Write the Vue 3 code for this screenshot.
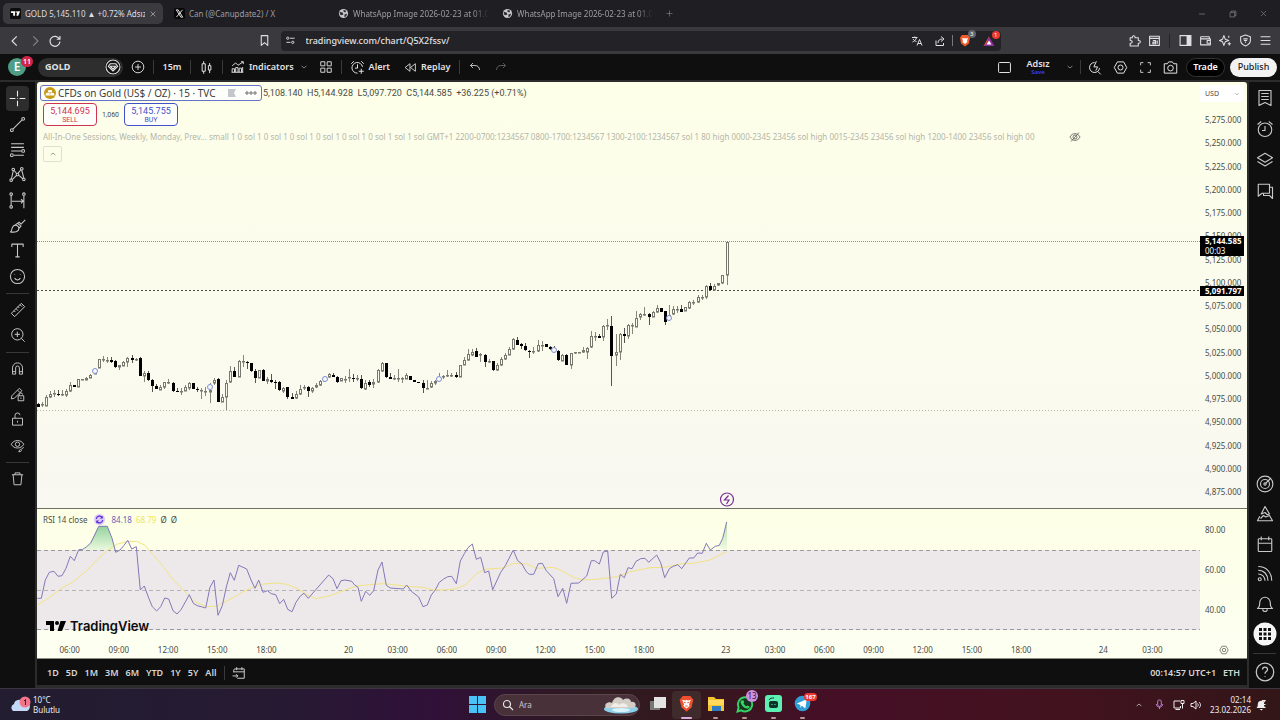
<script setup>
import { h } from 'vue'

const c = (x, y, r) => `M${x - r} ${y}a${r} ${r} 0 1 0 ${2 * r} 0a${r} ${r} 0 1 0 ${-2 * r} 0`

const shapes = {
  back: 'M15 4l-8 8 8 8',
  forward: 'M9 4l8 8-8 8',
  reload: 'M19.500 8.500A8.500 8.500 0 1 0 20.500 13M20.500 3.500v5.500h-5.500',
  bookmark: 'M6 3h12v18l-6-5-6 5z',
  tune: c(6, 7, 2.5) + 'M11 7h10' + c(17, 16, 2.5) + 'M3 16h9',
  translate: 'M2 5h11M7.500 3v2M11 5c-1 5-5 8-8 9M4 8c2 3 4 4 7 5M12 21l5-12 5 12M14 17h6',
  share: 'M4 11v10h15v-5M8 16c0-6 4-8 9-8M14 3l6 5-6 5',
  puzzle: 'M4 7h4c-1-5 6-5 5 0h6v5c5-1 5 6 0 5v5H4v-5c5 1 5-6 0-5z',
  readbox: 'M3 4h18v17H3zM3 8h18M9 12h5v6H9v-3h5M17 12v6',
  wallet: 'M3 5h16v4M3 5v15h18V9H3M21 12h-6v5h6',
  sparkle: 'M9 3l2.500 6.500L18 12l-6.500 2.500L9 21l-2.500-6.500L1 12l5.500-2.500zM19 15v6M16 18h6M18 3v4',
  shield: 'M12 2l9 3v7c0 5-4 8-9 10-5-2-9-5-9-10V5zM8 9h8M9 12h6M11 15h2',
  menu: 'M3 5h18M3 12h18M3 19h18',
  min: 'M5 12h14',
  restore: 'M5 8h11v11H5zM8 8V5h11v11h-3',
  close: 'M5 5l14 14M19 5L5 19',
  plus: 'M12 4v16M4 12h16',
  plusCircle: c(12, 12, 10) + 'M12 7v10M7 12h10',
  gem: c(12, 12, 10.5) + 'M8 7h8l3 4-7 7-7-7zM8 11l4 4 4-4z',
  candles: 'M5 6h5v12H5zM7.500 2v4M7.500 18v4M15 9h4v7h-4zM17 5v4M17 16v5',
  indicator: 'M2 21v-6h4v6M8 21v-8h4v8M14 21v-7h4v7M1 21h20M20 21v-9M2 10l6-5 4 4 9-6M17 3h4v4',
  chevDown: 'M5 9l7 6 7-6',
  chevUp: 'M5 15l7-6 7 6',
  grid: 'M3 3h7v7H3zM14 3h7v7h-7zM3 14h7v7H3zM14 14h7v7h-7z',
  alertPlus: 'M20 11a8.500 8.500 0 1 0-8 10M12 7v6H8M2 6l4-4M22 6l-4-4M18 14v8M14 18h8',
  replay: 'M11 5v14l-9-7zM21 5v14l-9-7z',
  undo: 'M8 4L3 9l5 5M3 9h9c6 0 9 4 9 9',
  redo: 'M16 4l5 5-5 5M21 9h-9c-6 0-9 4-9 9',
  square: 'M4 4h16a1.500 1.500 0 0 1 1.500 1.500v13a1.500 1.500 0 0 1-1.500 1.500H4a1.500 1.500 0 0 1-1.500-1.500v-13A1.500 1.500 0 0 1 4 4z',
  searchBolt: 'M12 4a8 8 0 1 0 8 9M17 18l5 5M15 2l-4 9h6l-3 6',
  hexGear: 'M7 3h10l5 9-5 9H7l-5-9z' + c(12, 12, 4),
  full: 'M3 8V3h5M16 3h5v5M21 16v5h-5M8 21H3v-5',
  camera: 'M2 6h5l2-3h6l2 3h5v15H2z' + c(12, 13, 4.5),
  cross: 'M12 1v8M12 15v8M1 12h8M15 12h8M11.500 12h1',
  trend: c(4, 20, 2) + c(20, 4, 2) + 'M5.500 18.500l13-13',
  fib: 'M3 4h18M3 9h18M3 14h15M7 20h14' + c(20, 14, 2) + c(4, 20, 2),
  pattern: c(3, 20, 1.8) + c(6, 5, 1.8) + c(18, 4, 1.8) + c(21, 19, 1.8) + c(12, 12, 1.8) + 'M3.500 18L6 7M7 6l4 5M13.500 13l6 5M17 5l-4 5M11 13l-6 6M18 6l3 11',
  range: c(3, 3, 1.8) + c(21, 3, 1.8) + c(3, 21, 1.8) + 'M3 5v14M21 5v18M4 13h16M17 10l3 3-3 3',
  brush: 'M2 21c3-2 1-5 4-8 3-3 8-1 8 3 0 5-6 6-12 5zM9 11l3-2 5 4-3 3M15 8l2 2 6-6M12 9l3-2',
  text: 'M4 7V3h16v4M12 3v18M9 21h6',
  smile: c(12, 12, 10) + 'M8 9v1M16 9v1M8 14c2 4 6 4 8 0',
  ruler: 'M2 17L17 2l5 5L7 22zM6 13l2 2M9 10l3 3M12 7l2 2M15 4l3 3',
  zoomIn: c(11, 11, 8.5) + 'M17 17l5 5M11 7v8M7 11h8',
  magnet: 'M4 21V11a8 8 0 0 1 16 0v10h-5V11a3 3 0 0 0-6 0v10zM4 17h5M15 17h5',
  pencilLock: 'M2 19l1-5L15 2l4 4L7 18zM12 5l4 4M13 14h9v8h-9zM15 14v-2a2.500 2.500 0 0 1 5 0M17.500 17v2',
  lock: 'M4 10h16v11H4zM8 10V6a4 4 0 0 1 8-1M12 14v3',
  eye: 'M2 10c4-8 16-8 20 0-4 8-16 8-20 0z' + c(12, 10, 3.5) + 'M14 22c1-4 3-4 4-3s0 3-4 3M18 18l4-3',
  eyeOff: 'M2 12c4-9 16-9 20 0-4 9-16 9-20 0z' + c(12, 12, 4) + 'M4 21L20 3',
  trash: 'M3 6h18M8 6V3h8v3M5 6l1.500 16h11L19 6',
  list: 'M4 2h16v20l-8-4-8 4zM7 6h10M7 10h10M7 14h10',
  alarm: c(12, 13, 9) + 'M12 8v6H8M2 6l5-4M22 6l-5-4',
  layers: 'M12 3l10 6-10 6L2 9zM2 14l10 6 10-6',
  chat: 'M3 3h15v12H8l-5 4zM18 7h4v15l-4-4h-8v-3',
  target: c(12, 12, 10.5) + c(12, 12, 6) + c(12, 12, 1.5) + 'M13 11l7-7',
  mount: 'M12 2l6 10-3 1-3-3-5 2zM5 15l-3 6h20l-4-7-5 2-3-2-4 4',
  calendar: 'M4 5h16a1 1 0 0 1 1 1v15a1 1 0 0 1-1 1H4a1 1 0 0 1-1-1V6a1 1 0 0 1 1-1zM3 11h18M7 2v5M17 2v5',
  feed: c(5, 19, 2) + 'M3 12c5 0 9 4 9 9M3 7c8 0 13 6 13 14M3 2c11 0 18 8 18 19',
  bell: 'M2 18h20c-3-2-3-4-3-8a7 7 0 0 0-14 0c0 4 0 6-3 8zM9 19c0 4 6 4 6 0',
  help: c(12, 12, 10.5) + 'M9 9c0-4 6-4 6 0 0 3-3 2-3 5M12 17v1',
  goto: 'M7 5h14v16H9M3 11V7c0-1 1-2 2-2h2M3 10h18M8 2v5M17 2v5M1 17h9M7 14l3 3-3 3',
  search: c(10, 10, 7) + 'M15 15l7 7',
  mic: 'M12 2c4 0 4 2 4 9s-8 7-8 0 0-9 4-9zM5 11c0 9 14 9 14 0M12 18v4',
  monitor: 'M14 4H2v14h13v-4M5 21h9M16 3h6v6h-6zM19 9v10',
  sound: 'M2 9h4l6-5v16l-6-5H2zM15 9c2 2 2 4 0 6M18 6c4 4 4 8 0 12'
}

const Ico = (props) =>
  h('svg', { viewBox: '0 0 24 24', width: props.s || 16, height: props.s || 16, class: 'ico', 'aria-hidden': 'true' }, [
    h('path', { d: shapes[props.n] })
  ])
Ico.props = ['n', 's']

const railA = [['cross', 'Cross'], ['trend', 'Trend line'], ['fib', 'Fib retracement'], ['pattern', 'Patterns'], ['range', 'Ranges'], ['brush', 'Brush'], ['text', 'Text'], ['smile', 'Icons']]
const railB = [['ruler', 'Measure'], ['zoomIn', 'Zoom in']]
const railC = [['magnet', 'Magnet'], ['pencilLock', 'Stay in drawing mode'], ['lock', 'Lock drawings'], ['eye', 'Hide drawings']]
const sideTop = [['list', 'Watchlist'], ['alarm', 'Alerts'], ['layers', 'Object tree'], ['chat', 'Chats']]
const sideBottom = [['target', 'Screeners'], ['mount', 'Pine'], ['calendar', 'Calendar'], ['feed', 'News'], ['bell', 'Notifications']]

const prices = Array.from({ length: 17 }, (_, i) =>
  (5275 - i * 25).toLocaleString('en-US', { minimumFractionDigits: 3 })
)
const times = ['06:00', '09:00', '12:00', '15:00', '18:00', '', '20', '03:00', '06:00', '09:00', '12:00', '15:00', '18:00', '', '23', '03:00', '06:00', '09:00', '12:00', '15:00', '18:00', '', '24', '03:00']
const ranges = ['1D', '5D', '1M', '3M', '6M', 'YTD', '1Y', '5Y', 'All']

// x, filled, body top, body bottom, high, low
const early = [
  [24,1,312,320,308,322],[36,0,313,316,307,320],[48,0,290,317,284,318],[60,0,281,292,274,293],[73,0,279,281,270,290],[85,1,281,285,270,288],
  [97,0,282,286,270,287],[109,0,272,285,266,292],[122,0,254,274,247,276],[134,1,256,260,254,261],[146,0,238,260,238,260],[158,0,238,239,238,239],
  [170,0,235,239,232,240],[182,0,226,234,223,235],[195,0,208,222,208,222],[207,0,178,203,176,204],[220,0,177,178,168,185],[232,0,179,181,172,188],
  [244,1,179,186,170,188],[256,1,184,202,180,204],[269,0,196,200,194,210],[281,0,186,198,184,199],[293,0,173,187,171,200],[306,1,174,181,166,188],
  [319,0,176,180,173,182],[331,1,174,228,171,228],[343,0,220,228,212,246],[355,1,219,241,214,242],[367,1,240,259,238,275],[380,1,258,267,252,268],
  [392,0,262,270,255,271],[404,0,247,262,246,268],[416,0,247,249,238,252],[429,1,249,273,247,275],[441,1,272,276,265,277],[453,0,272,277,265,286],
  [466,0,260,272,255,274],[478,0,250,265,247,270],[490,1,249,266,248,267],[502,1,266,271,262,277],[514,0,271,273,265,298],[527,0,272,274,262,287],
  [541,0,270,275,250,308],[552,0,240,248,234,255],[565,1,236,305,233,305],[577,0,290,305,282,307],[589,0,248,290,240,330],[601,0,213,246,197,248],
  [614,1,212,230,200,232],[627,0,182,230,181,232],[639,0,184,186,165,200],[651,1,186,190,184,207],[663,1,190,214,188,215],[675,1,214,233,208,250],
  [687,0,211,233,209,234],[699,1,210,243,208,244],[712,0,238,242,232,252],[724,1,240,247,222,250],[737,1,247,249,239,266],[749,1,246,270,244,272],
  [761,0,264,272,260,280],[773,1,262,290,260,298],[786,1,290,296,280,298],[798,0,283,295,272,297],[811,0,266,282,255,284],[823,0,260,264,255,269],
  [835,1,260,273,257,290],[848,0,265,272,262,278],[860,0,255,262,248,264],[872,0,242,255,240,257],[884,0,237,242,237,242],[897,0,222,230,220,233],
  [909,1,226,230,219,232],[921,1,230,247,228,248],[933,0,233,244,233,244],[946,0,236,237,229,250],[958,0,231,232,206,246],[970,1,233,236,222,246],
  [982,0,235,236,226,242],[995,1,238,263,226,268],[1007,0,248,266,240,270],[1019,1,247,254,240,260],[1031,0,245,252,238,264],[1045,0,210,247,208,249],
  [1057,0,190,213,187,215],[1069,1,190,231,188,233],[1081,1,232,236,219,238],[1093,0,234,237,226,240],[1105,0,234,235,206,246]
]
const late = [
  [37,0,474,476,470,488],[50,0,466,476,458,478],[62,1,468,480,468,480],[74,1,480,485,480,485],[86,1,485,490,485,490],[99,1,490,505,480,518],
  [112,0,503,505,480,507],[124,0,488,502,484,504],[136,0,484,490,480,495],[148,0,472,478,458,480],[161,0,468,470,464,478],[173,0,464,467,450,470],
  [185,0,465,467,460,472],[199,1,465,472,455,474],[211,0,434,470,434,470],[223,0,420,434,410,436],[236,0,403,420,386,424],[248,0,396,405,388,408],
  [259,1,393,410,384,411],[272,0,402,406,398,426],[285,1,405,425,403,442],[297,0,424,426,418,430],[309,1,424,450,422,452],[321,0,434,451,430,452],
  [333,0,418,434,412,438],[346,0,406,417,398,419],[359,0,388,404,382,406],[370,0,358,388,354,390],[382,1,361,374,350,376],[394,1,373,378,368,386],
  [406,1,378,391,370,392],[418,1,392,396,390,414],[431,0,393,395,382,402],[445,0,374,394,360,396],[457,0,374,376,362,394],[469,1,373,380,371,382],
  [482,1,380,388,378,390],[494,1,385,395,378,396],[506,1,393,421,390,424],[518,0,405,422,403,424],[530,1,405,434,403,436],[543,0,400,434,398,446],
  [555,0,397,400,395,403],[567,0,396,399,396,399],[579,0,389,397,382,399],[591,0,384,396,380,416],[604,0,349,382,332,384],[616,0,347,349,337,362],
  [628,1,347,353,342,354],[640,0,319,351,315,362],[653,0,314,318,298,330],[665,1,317,407,288,498],[679,0,397,404,342,438],[691,0,342,396,338,420],
  [703,1,342,348,324,368],[716,0,316,348,312,358],[728,0,316,318,310,342],[740,0,293,320,272,322],[752,0,282,290,280,300],[764,0,282,284,260,288],
  [777,1,282,290,280,314],[789,0,276,290,274,292],[801,0,264,276,254,280],[813,1,264,275,264,275],[825,1,274,305,272,314],[837,0,284,295,256,300],
  [851,0,267,283,258,286],[863,0,266,268,258,278],[875,1,268,275,254,276],[887,0,262,274,262,274],[899,0,247,265,243,266],[911,0,246,248,240,256],
  [925,0,230,247,225,249],[937,0,231,233,224,240],[949,0,199,230,195,236],[961,1,197,211,190,214],[973,0,197,209,192,212],[985,0,189,196,188,198],
  [997,0,166,190,164,192],[1011,0,66,166,66,194]
]
const py = (v) => Math.round(218 + v / 3)
const bars = [...early, ...late.map(([x, f, ...v]) => [x + 1080, f, ...v.map((n) => n - 240)])].map(
  ([x, filled, top, bottom, high, low]) => {
    const cx = Math.floor(x / 3 - 7)
    return { cx, filled, top: py(top), bottom: Math.max(py(bottom), py(top) + 1), high: py(high), low: py(low) }
  }
)
const marks = [[58, 289], [173, 305], [288, 297], [402, 297], [517, 268], [632, 236]]

const join = (a, b) => [...a, ...b.map(([x, y]) => [x + 1080, y])].map(([x, y]) => [+(x / 3 - 7).toFixed(1), +(y / 3 - 9).toFixed(1)]).join(' ')
const rsi = join(
  [[22,295],[34,295],[46,240],[58,217],[72,214],[84,229],[96,227],[108,205],[121,169],[133,182],[146,149],[158,148],[170,140],[182,129],[194,105],[206,79],[232,79],[246,115],[257,157],[270,150],[282,136],[293,121],[305,147],[319,140],[331,270],[343,258],[355,291],[367,320],[380,333],[392,320],[404,294],[416,297],[429,332],[441,342],[453,329],[466,306],[478,284],[490,310],[502,317],[514,320],[527,324],[540,262],[552,240],[564,346],[577,317],[589,261],[601,218],[613,241],[626,196],[650,207],[663,240],[675,265],[686,240],[699,277],[712,272],[724,281],[737,284],[749,311],[761,298],[773,328],[786,335],[798,307],[811,288],[822,280],[835,295],[896,225],[909,236],[921,266],[933,242],[945,240],[965,244],[974,255],[984,262],[994,304],[1007,274],[1019,286],[1031,272],[1044,210],[1056,186],[1069,256],[1081,264]],
  [[40,267],[50,255],[64,274],[86,291],[99,320],[112,315],[124,285],[136,270],[148,247],[161,237],[173,230],[185,229],[199,251],[211,183],[223,161],[234,143],[247,132],[259,178],[272,172],[284,218],[296,213],[308,269],[332,217],[346,197],[370,150],[383,182],[396,192],[409,215],[418,223],[431,223],[445,191],[457,190],[469,212],[491,236],[504,290],[518,265],[530,310],[543,250],[566,249],[590,228],[604,182],[614,182],[628,192],[640,156],[653,153],[665,295],[679,282],[691,223],[703,233],[714,203],[726,206],[738,184],[752,176],[765,175],[776,187],[800,165],[812,188],[824,233],[838,206],[850,199],[863,194],[875,206],[898,174],[911,174],[923,159],[937,160],[949,130],[961,150],[976,139],[988,136],[998,115],[1010,66]]
)
const average = join(
  [[22,315],[50,298],[100,262],[130,245],[170,212],[200,180],[230,153],[260,133],[290,125],[320,124],[345,136],[370,165],[400,200],[430,240],[465,275],[490,303],[530,320],[560,318],[600,298],[640,275],[670,262],[700,252],[740,249],[770,253],[800,265],[840,289],[860,296],[900,287],[940,272],[980,258],[1020,254],[1060,251]],
  [[30,256],[60,260],[100,262],[130,270],[160,270],[200,266],[230,252],[260,220],[290,207],[340,204],[370,190],[410,192],[440,205],[490,202],[520,214],[550,232],[580,240],[620,238],[680,230],[720,215],[780,203],[830,201],[870,192],[910,190],[960,180],[1010,155]]
)
</script>

<template>
  <div class="screen">
    <nav class="tabs" aria-label="Browser tabs">
      <a class="tab active" href="#gold">
        <svg class="fav" viewBox="0 0 12 12"><rect width="12" height="12" rx="2" fill="#0c0c0c" /><path d="M1 3.500h4.500v5h-2v-3H1zM8 3.500h3L9 8.500H7z" fill="#fff" /><circle cx="6.800" cy="4.400" r="0.900" fill="#fff" /></svg>
        <span class="tab-text">GOLD 5,145.110 ▲ +0.72% Adsız</span>
        <Ico n="close" s="8" />
      </a>
      <a class="tab" href="#x">
        <svg class="fav" viewBox="0 0 12 12"><rect width="12" height="12" rx="2" fill="#070707" /><path d="M2.500 2h2l5 8h-2zM9.300 2L2.600 10" fill="none" stroke="#eee" stroke-width="1" /></svg>
        <span class="tab-text">Can (@Canupdate2) / X</span>
      </a>
      <a v-for="n in 2" :key="n" class="tab" href="#image">
        <svg class="fav" viewBox="0 0 12 12"><circle cx="6" cy="6" r="5" fill="#c9c9cc" /><path d="M2 4l3 1 1 2-2 1-2-1zM6 2l3 1-1 2-2-1zM7 7l3-1-1 3-2 1z" fill="#303034" /></svg>
        <span class="tab-text fade">WhatsApp Image 2026-02-23 at 01.0</span>
      </a>
      <button class="newtab" aria-label="New tab"><Ico n="plus" s="9" /></button>
      <span class="grow"></span>
      <button class="win" aria-label="Minimize"><Ico n="min" s="10" /></button>
      <button class="win" aria-label="Restore"><Ico n="restore" s="10" /></button>
      <button class="win" aria-label="Close"><Ico n="close" s="9" /></button>
    </nav>

    <div class="browser">
      <button class="b20" aria-label="Back"><Ico n="back" s="14" /></button>
      <button class="b20 dim" aria-label="Forward"><Ico n="forward" s="14" /></button>
      <button class="b20" aria-label="Reload"><Ico n="reload" s="14" /></button>
      <span class="grow wide-left"></span>
      <button class="b20 mark" aria-label="Bookmark"><Ico n="bookmark" s="13" /></button>
      <div class="address">
        <button class="b20" aria-label="Site settings"><Ico n="tune" s="11" /></button>
        <input class="url" aria-label="Address" value="tradingview.com/chart/Q5X2fssv/" />
        <button class="b23" aria-label="Translate"><Ico n="translate" s="12" /></button>
        <button class="b23" aria-label="Share"><Ico n="share" s="12" /></button>
        <span class="vline light"></span>
        <button class="b24 badged" aria-label="Brave Shields">
          <svg width="12" height="13" viewBox="0 0 24 26"><path d="M6 2h12l4 5-2 12-8 6-8-6L2 7z" fill="#f15a29" /><path d="M6 8l4 1 2-1 2 1 4-1-2 6 1 2-5 4-5-4 1-2z" fill="#fff" /></svg>
          <span class="dot grey">3</span>
        </button>
        <button class="b24 badged" aria-label="Rewards">
          <svg width="12" height="12" viewBox="0 0 24 24"><path d="M12 3L1 22h11z" fill="#f0522d" /><path d="M12 3l11 19H1l6-5z" fill="#8d2f9c" /><path d="M12 11l5 8H7z" fill="#fff" /></svg>
          <span class="dot red">1</span>
        </button>
      </div>
      <span class="grow narrow-right"></span>
      <button class="b20" aria-label="Extensions"><Ico n="puzzle" s="13" /></button>
      <button class="b20" aria-label="Search page"><Ico n="readbox" s="13" /></button>
      <span class="vline dark"></span>
      <button class="b20" aria-label="Sidebar">
        <svg width="13" height="13" viewBox="0 0 24 24"><path d="M2 3h20v18H2z" fill="none" stroke="currentColor" stroke-width="2" /><path d="M14 3h8v18h-8z" fill="currentColor" /></svg>
      </button>
      <button class="b20" aria-label="Wallet"><Ico n="wallet" s="13" /></button>
      <button class="b20" aria-label="Assistant"><Ico n="sparkle" s="13" /></button>
      <button class="b20" aria-label="VPN"><Ico n="shield" s="13" /></button>
      <button class="b20" aria-label="Menu"><Ico n="menu" s="13" /></button>
    </div>

    <header class="top">
      <button class="avatar" aria-label="Account"><span class="face">E</span><span class="count">11</span></button>
      <button class="symbol">GOLD <Ico n="gem" s="16" /></button>
      <button class="b30" aria-label="Compare"><Ico n="plusCircle" s="14" /></button>
      <span class="vline"></span>
      <button class="b36">15m</button>
      <span class="vline"></span>
      <button class="b31" aria-label="Chart type"><Ico n="candles" s="15" /></button>
      <span class="vline"></span>
      <button class="labelled ind"><Ico n="indicator" s="14" />Indicators</button>
      <button class="b20" aria-label="Favourites"><Ico n="chevDown" s="8" /></button>
      <button class="b24" aria-label="Templates"><Ico n="grid" s="14" /></button>
      <span class="vline after-grid"></span>
      <button class="labelled"><Ico n="alertPlus" s="15" />Alert</button>
      <button class="labelled rep"><Ico n="replay" s="13" />Replay</button>
      <span class="vline"></span>
      <button class="b30" aria-label="Undo"><Ico n="undo" s="12" /></button>
      <button class="b20 faint" aria-label="Redo"><Ico n="redo" s="12" /></button>
      <span class="grow"></span>
      <button class="b30" aria-label="Layout"><Ico n="square" s="15" /></button>
      <button class="layout"><span>Adsız</span><span class="save">Save</span></button>
      <button class="b20" aria-label="Manage layouts"><Ico n="chevDown" s="8" /></button>
      <span class="vline"></span>
      <button class="b26" aria-label="Quick search"><Ico n="searchBolt" s="15" /></button>
      <button class="b26" aria-label="Settings"><Ico n="hexGear" s="15" /></button>
      <button class="b24" aria-label="Fullscreen"><Ico n="full" s="13" /></button>
      <button class="b26" aria-label="Snapshot"><Ico n="camera" s="15" /></button>
      <button class="trade">Trade</button>
      <button class="publish">Publish</button>
    </header>

    <main class="work">
      <aside class="rail left" aria-label="Drawing tools">
        <div class="group g8"><button v-for="(t, i) in railA" :key="t[0]" :class="{ on: i === 0 }" :aria-label="t[1]"><Ico :n="t[0]" s="17" /></button></div>
        <hr />
        <div class="group g2"><button v-for="t in railB" :key="t[0]" :aria-label="t[1]"><Ico :n="t[0]" s="16" /></button></div>
        <hr />
        <div class="group g4"><button v-for="t in railC" :key="t[0]" :aria-label="t[1]"><Ico :n="t[0]" s="15" /></button></div>
        <hr />
        <div class="group g1"><button aria-label="Remove"><Ico n="trash" s="15" /></button></div>
      </aside>

      <section class="center">
        <div class="pane price">
          <div class="plot">
            <svg class="canvas" viewBox="0 0 1163 426" preserveAspectRatio="none">
              <path d="M0 159.500H1163" class="dots strong" />
              <path d="M0 208.500H1163" class="dash-now" />
              <path d="M0 328.500H1163" class="dots" />
              <g v-for="(b, i) in bars" :key="i" :class="b.filled ? 'down' : 'up'">
                <path :d="`M${b.cx + 0.5} ${b.high}V${b.low}`" />
                <rect v-if="b.filled" :x="b.cx - 1" :y="b.top" width="3" :height="b.bottom - b.top" />
                <rect v-else :x="b.cx - 0.5" :y="b.top + 0.5" width="2" :height="b.bottom - b.top - 0.5" />
              </g>
              <circle v-for="m in marks" :key="m[0]" :cx="m[0]" :cy="m[1]" r="2.500" class="ring" />
              <circle cx="690" cy="417.500" r="6.500" class="event" />
              <path d="M691.500 413.500l-4 4.500h4.500l-2.500 4" class="event" />
            </svg>
            <div class="legend">
              <div class="row">
                <button class="title">
                  <svg class="gold" viewBox="0 0 24 24"><circle cx="12" cy="12" r="12" fill="#c79a16" /><path d="M9 6h6l2 5H7zM4 12h7l1 5H3zM13 12h7l1 5h-9z" fill="#fff" /></svg>
                  <span>CFDs on Gold (US$ / OZ) · 15 · TVC</span>
                  <svg class="flag" viewBox="0 0 8 8"><path d="M0 0h8L6 4l2 4H0z" fill="#c5c6cc" /></svg>
                  <svg class="more" viewBox="0 0 12 4"><circle cx="2" cy="2" r="1.200" /><circle cx="6" cy="2" r="1.200" /><circle cx="10" cy="2" r="1.200" /></svg>
                </button>
                <span class="ohlc">5,108.140&nbsp; H5,144.928&nbsp; L5,097.720&nbsp; C5,144.585&nbsp; +36.225 (+0.71%)</span>
              </div>
              <div class="row quotes">
                <button class="quote sell"><span>5,144.695</span><small>SELL</small></button>
                <span class="spread">1,060</span>
                <button class="quote buy"><span>5,145.755</span><small>BUY</small></button>
              </div>
              <div class="row study">
                <span class="study-text">All-In-One Sessions, Weekly, Monday, Prev... small 1 0 sol 1 0 sol 1 0 sol 1 0 sol 1 0 sol 1 0 sol 1 sol 1 sol GMT+1 2200-0700:1234567 0800-1700:1234567 1300-2100:1234567 sol 1 80 high 0000-2345 23456 sol high 0015-2345 23456 sol high 1200-1400 23456 sol high 00</span>
                <Ico n="eyeOff" s="12" />
              </div>
              <button class="fold" aria-label="Collapse legend"><Ico n="chevUp" s="8" /></button>
            </div>
          </div>
          <div class="scale">
            <label class="currency"><select aria-label="Currency"><option>USD</option></select><Ico n="chevDown" s="6" /></label>
            <span v-for="p in prices" :key="p">{{ p }}</span>
            <div class="tag last"><b>5,144.585</b><span>00:03</span></div>
            <div class="tag prev"><b>5,091.797</b></div>
          </div>
        </div>

        <div class="pane rsi">
          <div class="plot">
            <svg class="canvas" viewBox="0 0 1163 132" preserveAspectRatio="none">
              <defs>
                <linearGradient id="over" x1="0" y1="0" x2="0" y2="1"><stop offset="0" stop-color="#93d29b" /><stop offset="1" stop-color="#ebf9dd" /></linearGradient>
              </defs>
              <rect x="0" y="41" width="1163" height="80" fill="#ede9eb" />
              <path d="M46 41l7-7 5-10 4-7h8l5 12 4 12z" fill="url(#over)" />
              <path d="M681 38l5-9 4-17v29z" fill="url(#over)" opacity="0.700" />
              <path d="M0 41.500H1163M0 120.500H1163" class="level" />
              <path d="M0 81.500H1163" class="level mid" />
              <polyline :points="average" class="avg" />
              <polyline :points="rsi" class="osc" />
            </svg>
            <div class="rsi-legend">
              <span>RSI 14 close</span>
              <svg class="sync" viewBox="0 0 24 24"><circle cx="12" cy="12" r="12" fill="#d9c8fb" /><path d="M5 11a7 7 0 0 1 13-3M19 13a7 7 0 0 1-13 3" fill="none" stroke="#5b2bd0" stroke-width="2.500" /><path d="M19 4v6h-6zM5 20v-6h6z" fill="#5b2bd0" /></svg>
              <span class="violet">84.18</span><span class="yellow">68.79</span><span>Ø</span><span>Ø</span>
            </div>
            <div class="brand">
              <svg viewBox="0 0 20 12" width="20" height="12"><path d="M0 1h8v10H4V5H0zM14.500 1H20l-4 10h-4.500z" /><circle cx="11" cy="3" r="2" /></svg>
              TradingView
            </div>
          </div>
          <div class="scale rsi-scale"><span>80.00</span><span>60.00</span><span>40.00</span></div>
        </div>

        <div class="axis">
          <div class="times"><span v-for="(t, i) in times" :key="i" :class="{ gap: !t }">{{ t }}</span></div>
          <button class="axis-set" aria-label="Axis settings"><Ico n="hexGear" s="10" /></button>
        </div>

        <footer class="ranges">
          <button v-for="r in ranges" :key="r">{{ r }}</button>
          <span class="vline"></span>
          <button aria-label="Go to date"><Ico n="goto" s="14" /></button>
          <span class="grow"></span>
          <button>00:14:57 UTC+1</button>
          <button>ETH</button>
        </footer>
      </section>

      <aside class="rail right" aria-label="Panels">
        <div class="side-top">
          <button v-for="t in sideTop" :key="t[0]" :aria-label="t[1]"><Ico :n="t[0]" s="18" /></button>
        </div>
        <span class="grow"></span>
        <button v-for="t in sideBottom" :key="t[0]" :aria-label="t[1]"><Ico :n="t[0]" s="18" /></button>
        <button aria-label="Products">
          <svg width="24" height="24" viewBox="0 0 24 24"><circle cx="12" cy="12" r="11.500" fill="#f5f5f5" /><path d="M6 6h3v3H6zM10.500 6h3v3h-3zM15 6h3v3h-3zM6 10.500h3v3H6zM10.500 10.500h3v3h-3zM15 10.500h3v3h-3zM6 15h3v3H6zM10.500 15h3v3h-3zM15 15h3v3h-3z" fill="#111" /></svg>
        </button>
        <hr />
        <button aria-label="Help"><Ico n="help" s="20" /></button>
      </aside>
    </main>

    <footer class="taskbar">
      <button class="weather">
        <svg width="22" height="18" viewBox="0 0 22 18"><path d="M3 15a4 4 0 0 1 1-7 5 5 0 0 1 9-2 4.500 4.500 0 0 1 4 9z" fill="#c5daf7" /><circle cx="15" cy="6" r="5.500" fill="#f0768c" /><path d="M14 5l1.500-1.500V9" fill="none" stroke="#5b1526" /></svg>
        <span class="deg"><span>10°C</span><span>Bulutlu</span></span>
      </button>
      <div class="apps">
        <button class="start" aria-label="Start"><svg width="17" height="17" viewBox="0 0 17 17"><path d="M0 0h8v8H0zM9 0h8v8H9zM0 9h8v8H0zM9 9h8v8H9z" fill="#49c3f5" /></svg></button>
        <label class="find">
          <Ico n="search" s="12" />
          <input aria-label="Ara" placeholder="Ara" />
          <svg width="36" height="18" viewBox="0 0 36 18"><ellipse cx="18" cy="13" rx="17" ry="4.500" fill="#8ed0ea" /><path d="M3 12c-3-5 4-7 6-5 2-7 9-7 11-3 4-3 8-1 8 2 5-1 6 4 3 6z" fill="#d4cdc6" /><path d="M8 11c2-5 6-5 8-2 3-3 8-2 9 2z" fill="#f1eeea" /><ellipse cx="18" cy="14" rx="9" ry="2" fill="#d9f2fb" /></svg>
        </label>
        <button class="app" aria-label="Task view"><svg width="18" height="18" viewBox="0 0 18 18"><rect x="1" y="6" width="10" height="9" fill="#777" /><rect x="5" y="2" width="12" height="11" fill="#e3e3e3" /></svg></button>
        <button class="app cur" aria-label="Brave"><svg width="15" height="17" viewBox="0 0 24 26"><path d="M6 1h12l5 6-3 12-8 7-8-7L1 7z" fill="#f04e2c" /><path d="M5 7l5 1 2-1 2 1 5-1-3 7 1 3-5 4-5-4 1-3z" fill="#fff" /><path d="M8 11l3 1M16 11l-3 1M10 17h4" stroke="#f04e2c" stroke-width="1.500" /></svg></button>
        <button class="app run" aria-label="Explorer"><svg width="18" height="17" viewBox="0 0 18 17"><path d="M1 2h6l2 2h8v12H1z" fill="#f6c52d" /><path d="M1 5h16v5H1z" fill="#ffd95a" /><path d="M5 11h9v5H5z" fill="#2b7cc4" /></svg></button>
        <button class="app run badged" aria-label="WhatsApp">
          <svg width="18" height="18" viewBox="0 0 24 24"><path d="M2 22l1.500-5.500A9.500 9.500 0 1 1 7 20.500z" fill="#153521" stroke="#35d366" stroke-width="2.500" /><path d="M8 7l2 0 1 3-1 1c1 2 2 3 4 4l1-1 3 1c0 3-2 3-4 3-4-1-7-4-8-8 0-1 1-3 2-3z" fill="#35d366" /></svg>
          <span class="dot lilac">13</span>
        </button>
        <button class="app run" aria-label="Messenger"><svg width="17" height="17" viewBox="0 0 17 17"><rect width="17" height="17" rx="3" fill="#5df0b4" /><rect x="4" y="6" width="9" height="7" rx="2" fill="#0d3328" /><path d="M7 9v1M10 9v1" fill="none" stroke="#5df0b4" /><path d="M4 5c1-2 3-2 5-2" fill="none" stroke="#0d3328" /></svg></button>
        <button class="app run badged" aria-label="Telegram">
          <svg width="17" height="17" viewBox="0 0 24 24"><circle cx="12" cy="12" r="11" fill="#2f9fd8" /><path d="M4 12l14-6-2 13-5-4-2 3v-4z" fill="#fff" /></svg>
          <span class="dot red wide">167</span>
        </button>
      </div>
      <div class="tray">
        <button class="b20" aria-label="Hidden icons"><Ico n="chevUp" s="8" /></button>
        <button class="b20 mic" aria-label="Microphone"><Ico n="mic" s="11" /></button>
        <button class="b20" aria-label="Display"><Ico n="monitor" s="12" /></button>
        <button class="volume" aria-label="Volume"><Ico n="sound" s="12" /></button>
        <button class="clock"><span>02:14</span><span>23.02.2026</span></button>
        <button class="b20" aria-label="Notifications"><svg width="11" height="12" viewBox="0 0 22 24"><path d="M1 18c3-2 2-6 3-10 1-5 9-6 12-3v9l4 4zM7 20h7l-3 3z" fill="#eee" /><path d="M12 3h7l-7 8h7" fill="none" stroke="#eee" stroke-width="2" /></svg></button>
      </div>
    </footer>
  </div>
</template>

<style>
html, body { margin: 0; background: #0f0f0f; }
</style>

<style scoped>
.screen { min-height: 100vh; display: flex; flex-direction: column; background: #2c2c2c; color: #dbdbdb; font: 9px/12px "Noto Sans", "Open Sans", sans-serif; overflow: hidden; }
.screen * { box-sizing: border-box; }
button, input, select { font: inherit; color: inherit; background: none; border: 0; padding: 0; margin: 0; outline: 0; }
button { display: flex; align-items: center; justify-content: center; flex: none; }
svg { display: block; flex: none; }
.ico { fill: none; stroke: currentColor; stroke-width: 1.6; stroke-linejoin: round; }
.grow { flex: 1; }
.b20 { width: 20px; } .b23 { width: 23px; } .b24 { width: 24px; } .b26 { width: 26px; } .b30 { width: 30px; } .b31 { width: 31px; } .b36 { width: 36px; }
.vline { width: 1px; height: 14px; background: #3a3a3a; flex: none; }

.tabs { height: 27px; display: flex; align-items: center; gap: 4px; padding: 0 3px; background: #1f1e23; }
.tab { width: 160px; height: 21px; display: flex; align-items: center; gap: 4px; padding: 0 2px 0 7px; border-radius: 5px; color: #9d9da3; text-decoration: none; font-size: 8px; }
.tab.active { background: #3a3a3f; color: #dedee2; padding-right: 6px; }
.fav { width: 11px; height: 11px; }
.tab-text { flex: 1; overflow: hidden; white-space: nowrap; }
.fade { mask-image: linear-gradient(90deg, #000 88%, transparent); }
.newtab { width: 20px; color: #88888e; }
.win { width: 27px; color: #8a8a90; }

.browser { height: 27px; display: flex; align-items: center; padding: 0 5px; background: #3a393e; color: #e0e0e4; }
.browser .ico { stroke-width: 2; }
.browser .dim { color: #838388; }
.browser .wide-left { flex: 189; }
.browser .narrow-right { flex: 123; }
.mark { margin-right: 6px; }
.address { width: 720px; height: 20px; display: flex; align-items: center; background: #232227; border-radius: 4px; }
.url { flex: 1; min-width: 0; margin-left: 5px; font-weight: 500; }
.address .vline.light { background: #77777c; height: 11px; }
.vline.dark { background: #242428; height: 14px; margin: 0 5px; }
.badged { position: relative; }
.dot { position: absolute; top: -4px; right: 1px; width: 8px; height: 8px; border-radius: 4px; font-size: 6px; line-height: 8px; text-align: center; color: #fff; }
.dot.grey { background: #62646e; }
.dot.red { background: #ec3a32; }
.dot.lilac { width: 12px; height: 12px; border-radius: 6px; background: #cf8fe0; color: #35143d; font-size: 8px; line-height: 12px; top: -1px; }
.dot.wide { width: 13px; right: 0; top: 2px; font-weight: 700; }

.top { height: 26px; margin-bottom: 2px; display: flex; align-items: center; padding: 0 3px 0 5px; background: #0f0f0f; font-weight: 600; color: #e2e2e2; }
.avatar { width: 28px; position: relative; margin-right: 5px; justify-content: flex-start; padding-left: 3px; }
.face { width: 18px; height: 18px; border-radius: 9px; background: #4f9d84; color: #fff; font-size: 12px; line-height: 18px; text-align: center; }
.count { position: absolute; right: 0; top: -2px; width: 12px; height: 11px; border-radius: 6px; background: #ce2647; font-size: 7px; line-height: 11px; text-align: center; color: #fff; }
.symbol { width: 85px; height: 19px; border-radius: 10px; background: #2e2e2e; padding: 0 2px 0 7px; justify-content: space-between; font-weight: 700; }
.symbol .ico { background: #121212; border-radius: 8px; }
.labelled { gap: 4px; padding-left: 8px; }
.after-grid { margin-left: 3px; }
.rep { margin: 0 9px 0 6px; }
.faint { color: #6d6d6d; margin-left: 1px; }
.layout { width: 38px; flex-direction: column; line-height: 10px; margin-right: 3px; }
.save { font-size: 6px; line-height: 7px; color: #3b3ff0; }
.trade, .publish { height: 19px; border-radius: 10px; }
.trade { width: 39px; background: #000; border: 1px solid #333; margin: 0 5px 0 3px; color: #fff; }
.publish { width: 47px; background: #f2f2f2; color: #1b1b1b; font-weight: 500; }

.work { flex: 1; display: flex; min-height: 0; }
.rail { display: flex; flex-direction: column; background: #0f0f0f; color: #c9c9c9; }
.rail .ico { stroke-width: 1.5; }
.left { width: 35px; margin-right: 2px; padding-top: 4px; }
.group { display: flex; flex-direction: column; }
.group button { flex: 1; width: 23px; margin: 0 6px; border-radius: 4px; }
.group .on { background: #2d2d2d; color: #eee; }
.g8 { height: 203px; } .g2 { height: 51px; } .g4 { height: 102px; } .g1 { height: 25px; }
hr { width: 23px; height: 1px; border: 0; background: #383838; margin: 4px 6px 3px; flex: none; }
.right { width: 31px; margin-left: 2px; padding: 1px 0; }
.right button { height: 30px; width: 31px; }
.side-top { display: flex; flex-direction: column; gap: 1px; }
.right hr { margin: 4px 4px 3px; }

.center { flex: 1; min-width: 0; display: flex; flex-direction: column; background: #2c2c2c; color: #4b4c46; border-radius: 3px 3px 0 0; overflow: hidden; }
.pane { display: flex; min-height: 0; }
.price { flex: 426; background: linear-gradient(#fdffe8, #f9f8f1); border-bottom: 1px solid #6e7062; }
.rsi { flex: 132; background: linear-gradient(#fdffe6, #fdfff0); }
.plot { position: relative; flex: 1; min-width: 0; }
.canvas { position: absolute; inset: 0; width: 100%; height: 100%; overflow: hidden; }
.dots { fill: none; stroke: #b4b6a8; stroke-dasharray: 1 2; }
.dots.strong { stroke: #8f9183; stroke-dasharray: 1 1; }
.dash-now { fill: none; stroke: #4e4f48; stroke-dasharray: 2 2; }
.down path, .up path { fill: none; stroke: #55564f; }
.down rect { fill: #000; }
.up path { stroke: #85867c; }
.up rect { fill: #fbfcec; stroke: #77786e; stroke-width: 1; }
.ring { fill: #f7f9f4; stroke: #7f8ed6; }
.event { fill: none; stroke: #7a2f93; stroke-width: 1.2; }
.scale { position: relative; width: 47px; padding: 32px 0 10px 5px; display: flex; flex-direction: column; justify-content: space-between; font-size: 8px; line-height: 12px; z-index: 1; }
.currency { position: absolute; left: 0; top: 3px; width: 43px; height: 17px; display: flex; align-items: center; padding: 0 3px 0 5px; background: #fff; }
.currency select { appearance: none; flex: 1; font-size: 7px; }
.tag { position: absolute; left: 0; width: 44px; padding-left: 5px; background: #000; color: #fff; display: flex; flex-direction: column; line-height: 10px; }
.last { top: 154px; }
.prev { top: 204px; }
.rsi-scale { padding: 15px 0 25px 5px; }

.legend { position: relative; display: flex; flex-direction: column; padding: 3px 0 0 3px; align-items: flex-start; }
.row { display: flex; align-items: center; }
.title { height: 16px; width: 222px; padding: 0 4px 0 3px; border: 1px solid #6573c4; border-radius: 3px; background: #fefffa; font-size: 10px; color: #3c3d3b; justify-content: flex-start; white-space: nowrap; }
.gold { width: 12px; height: 12px; margin-right: 2px; }
.flag { width: 8px; height: 8px; margin-left: auto; }
.more { width: 12px; height: 4px; margin-left: 9px; fill: none; stroke: #444; stroke-width: 0.8; }
.ohlc { white-space: nowrap; margin-left: 1px; }
.ohlc, .quotes { font-family: Roboto, "Noto Sans", sans-serif; }
.quotes { padding: 2px 0 0 3px; }
.quote { width: 54px; height: 23px; border: 1px solid; border-radius: 4px; flex-direction: column; background: #fefffa; line-height: 10px; }
.quote small { font-size: 7px; line-height: 8px; }
.sell { color: #cf3352; } .buy { color: #4150c8; }
.spread { width: 27px; text-align: center; font-size: 7px; }
.study { padding: 5px 0 0 3px; color: #b5b6a9; font-size: 8px; }
.study-text { width: 1022px; overflow: hidden; white-space: nowrap; margin-right: 4px; }
.study .ico { color: #5a5b54; }
.fold { width: 19px; height: 16px; margin: 3px 0 0 3px; border: 1px solid #dfe0d0; border-radius: 2px; }
.rsi-legend { position: relative; display: flex; gap: 4px; align-items: center; padding: 5px 0 0 6px; line-height: 11px; font-size: 8px; }
.sync { width: 11px; height: 11px; margin: 0 2px 0 3px; }
.violet { color: #6c5fb8; } .yellow { color: #f1e55c; }
.brand { position: absolute; left: 9px; bottom: 7px; display: flex; align-items: center; gap: 4px; color: #0c0c0c; font: 600 13px/16px "Inter", "Noto Sans", sans-serif; }
.level { fill: none; stroke: #9a979e; stroke-dasharray: 4 3; }
.mid { stroke: #b5b2b8; }
.osc { fill: none; stroke: #8478b8; stroke-width: 1; }
.avg { fill: none; stroke: #f2e383; stroke-width: 1; }
.axis { height: 18px; display: flex; align-items: center; background: #fdfff0; border-bottom: 1px solid #8b8d80; }
.times { flex: 1; display: flex; padding: 0 23px 0 8px; }
.times span { flex: 3 1 0; min-width: 0; text-align: center; font-size: 8px; }
.times .gap { flex: 2 1 0; }
.axis-set { width: 47px; }
.ranges { height: 26px; margin-bottom: 3px; display: flex; align-items: center; gap: 7px; padding: 1px 7px 0 10px; background: #0f0f0f; color: #d6d6d6; font-weight: 600; }

.taskbar { height: 32px; display: grid; grid-template-columns: 1fr auto 1fr; align-items: center; padding-left: 6px; border-top: 1px solid #3c3540; background: linear-gradient(90deg, #221d30 0%, #261a33 22%, #301038 34%, #2e1b20 46%, #34181e 54%, #450f26 64%, #43121f 82%, #321618 100%); color: #ececf0; font-size: 8px; line-height: 10px; }
.weather { justify-self: start; gap: 1px; margin-left: 4px; }
.deg { display: flex; flex-direction: column; text-align: left; }
.apps { display: flex; align-items: center; }
.start { width: 17px; margin-right: 8px; }
.find { width: 146px; height: 22px; display: flex; align-items: center; border-radius: 11px; background: #49313a; border: 1px solid #5c444d; padding: 0 0 0 7px; margin-right: 3px; }
.find .ico { stroke-width: 2.2; }
.find input { flex: 1; min-width: 0; margin-left: 5px; font-size: 8px; }
.find input::placeholder { color: #cfc4c8; opacity: 1; }
.app { position: relative; width: 29px; height: 28px; }
.app svg { margin-bottom: 2px; }
.cur { background: #3f2a2c; border-radius: 4px; }
.cur::after, .run::after { content: ""; position: absolute; left: 12px; bottom: 0; width: 5px; height: 2px; border-radius: 1px; background: #b59a93; }
.cur::after { left: 9px; width: 11px; background: #dcaede; }
.tray { justify-self: end; display: flex; align-items: center; padding-right: 9px; }
.tray .ico { stroke-width: 2; }
.mic { color: #c48bd8; }
.volume { width: 14px; }
.clock { width: 48px; flex-direction: column; align-items: flex-end; }
</style>
